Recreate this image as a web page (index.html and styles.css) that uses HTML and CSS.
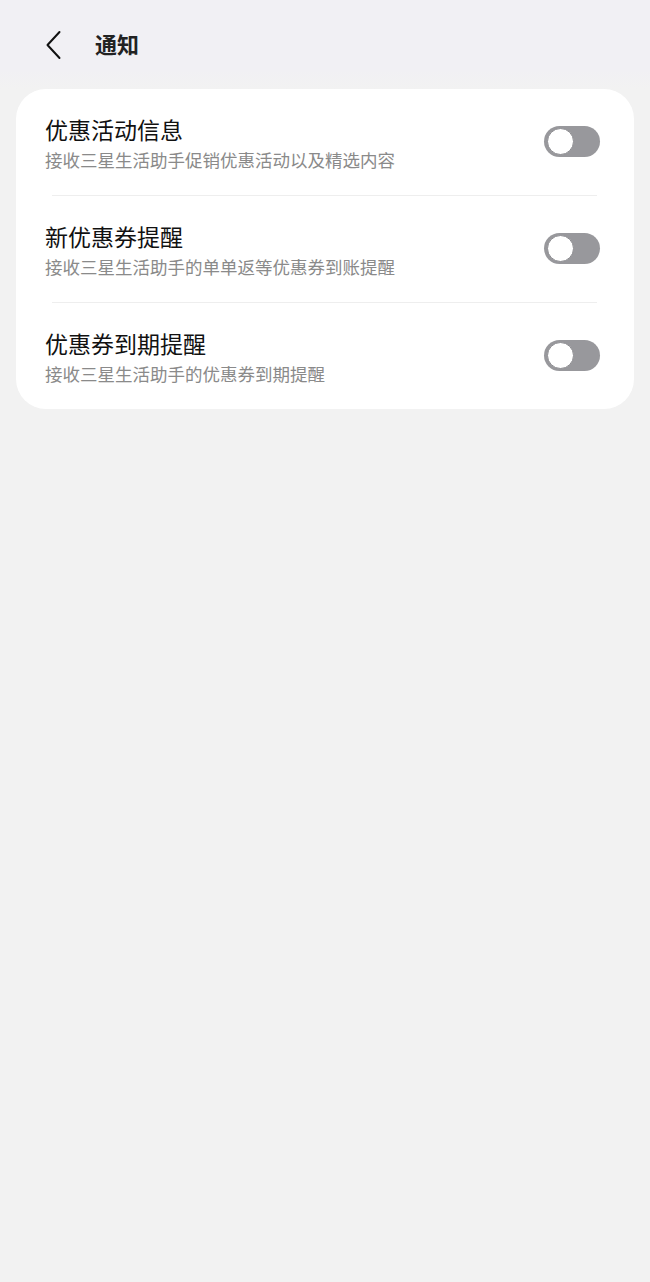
FILE: index.html
```html
<!DOCTYPE html>
<html lang="zh-CN">
<head>
    <meta charset="UTF-8">
    <meta name="viewport" content="width=device-width, initial-scale=1.0">
    <title>通知</title>
    <link rel="stylesheet" href="styles.css">
</head>
<body>
    <header class="top-bar">
        <button class="back-btn" aria-label="返回">
            <svg width="20" height="30" viewBox="0 0 20 30">
                <path d="M16.5 2 L4.5 15 L16.5 28" fill="none" stroke="#111" stroke-width="2" stroke-linecap="round" stroke-linejoin="round"/>
            </svg>
        </button>
        <h1 class="page-title">通知</h1>
    </header>

    <main class="content">
        <section class="card">
            <div class="setting-row">
                <div class="setting-text">
                    <div class="setting-title">优惠活动信息</div>
                    <div class="setting-desc">接收三星生活助手促销优惠活动以及精选内容</div>
                </div>
                <span class="switch"><span class="knob"></span></span>
            </div>
            <div class="divider"></div>
            <div class="setting-row">
                <div class="setting-text">
                    <div class="setting-title">新优惠券提醒</div>
                    <div class="setting-desc">接收三星生活助手的单单返等优惠券到账提醒</div>
                </div>
                <span class="switch"><span class="knob"></span></span>
            </div>
            <div class="divider"></div>
            <div class="setting-row">
                <div class="setting-text">
                    <div class="setting-title">优惠券到期提醒</div>
                    <div class="setting-desc">接收三星生活助手的优惠券到期提醒</div>
                </div>
                <span class="switch"><span class="knob"></span></span>
            </div>
        </section>
    </main>
</body>
</html>
```

FILE: styles.css
```css
html, body {
    margin: 0;
    padding: 0;
}
body {
    font-family: "Noto Sans CJK SC", "Noto Sans", sans-serif;
    background-color: #f2f2f2;
    min-height: 1282px;
    color: #111;
}
.top-bar {
    display: flex;
    align-items: center;
    height: 89px;
    padding: 0 0 0 43px;
    box-sizing: border-box;
    background: linear-gradient(#f1f0f4 0, #f1f0f4 70px, #f2f2f2 89px);
}
.back-btn {
    display: flex;
    align-items: center;
    background: none;
    border: none;
    padding: 0;
    margin: 0 32px 0 0;
    height: 30px;
    cursor: pointer;
}
.page-title {
    margin: 0;
    font-size: 22px;
    font-weight: 700;
    color: #222;
    line-height: 30px;
    padding-bottom: 4px;
}
.content {
    padding: 0 16px;
}
.card {
    background-color: #fff;
    border-radius: 30px;
}
.setting-row {
    display: flex;
    align-items: center;
    justify-content: space-between;
    padding: 26px 34px 24px 29px;
}
.setting-title {
    font-size: 23px;
    line-height: 29px;
    color: #111;
}
.setting-desc {
    margin-top: 5px;
    font-size: 17.5px;
    line-height: 22px;
    color: #8a8a8a;
}
.divider {
    height: 1px;
    margin: 0 37px 0 36px;
    background-color: #eeeeee;
}
.switch {
    display: flex;
    align-items: center;
    width: 56px;
    height: 31px;
    border-radius: 16px;
    background-color: #98989c;
    box-sizing: border-box;
    padding: 2px;
    margin-bottom: 3px;
    flex-shrink: 0;
}
.knob {
    width: 25px;
    height: 25px;
    border-radius: 50%;
    background-color: #fff;
    border: 1px solid #8e8e92;
    margin-left: 1px;
}
```
